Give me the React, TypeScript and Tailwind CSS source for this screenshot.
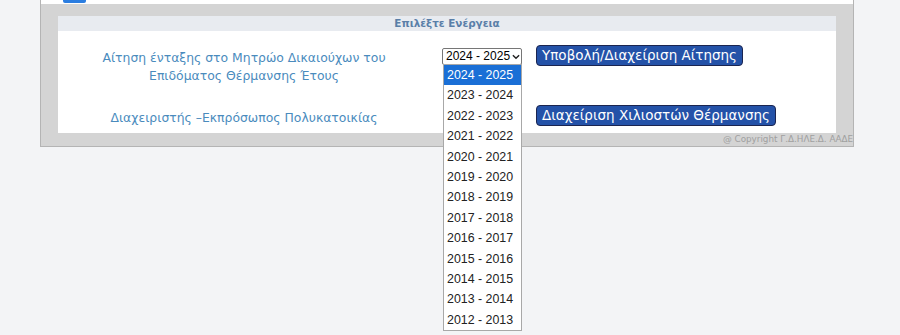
import React from "react";

const years = [
  "2024 - 2025","2023 - 2024","2022 - 2023","2021 - 2022","2020 - 2021","2019 - 2020","2018 - 2019",
  "2017 - 2018","2016 - 2017","2015 - 2016","2014 - 2015","2013 - 2014","2012 - 2013",
];

const verdana = { fontFamily: '"DejaVu Sans", Verdana, sans-serif' } as const;
const arial = { fontFamily: '"Liberation Sans", Arial, sans-serif' } as const;

export default function App() {
  return (
    <div className="w-[900px] h-[335px] bg-[#f3f4f6] overflow-hidden relative" style={verdana}>
      <div className="ml-[40px] w-[814px] border-l border-r border-b border-[#b4b4b4] bg-[#d4d4d4]">
        {/* top strip (cut off) */}
        <div className="h-[4px] bg-white relative flex">
          <div className="ml-[22px] w-[23px] h-[3px] bg-[#2b7de0] rounded-b-[2px]" />
        </div>
        <div className="px-[17px] pt-[12px] pb-[13px]">
          <div className="bg-white">
            <div className="h-[15px] bg-[#e8ebf0] text-center text-[10.4px] leading-[15px] font-bold text-[#5a7fa8]">
              Επιλέξτε Ενέργεια
            </div>
            {/* row 1 */}
            <div className="flex h-[64px]">
              <div className="w-[372px] text-center pt-[18px] text-[12.4px] leading-[18px] text-[#4a8bbd]">
                Αίτηση ένταξης στο Μητρώο Δικαιούχων του
                <br />
                Επιδόματος Θέρμανσης Έτους
              </div>
              <div className="w-[106px] pl-[12px] pt-[17px] relative">
                <div
                  className="w-[80px] h-[17px] border border-[#767676] rounded-[2px] flex items-center pl-[3px] text-[12px] text-black bg-white whitespace-nowrap"
                  style={arial}
                >
                  <span className="leading-[15px]">2024 - 2025</span>
                  <svg width="8" height="6" viewBox="0 0 9 6" className="ml-[2px] mt-[1px] shrink-0">
                    <path d="M1 1 L4.5 4.5 L8 1" fill="none" stroke="#222" strokeWidth="1.6" />
                  </svg>
                </div>
              </div>
              <div className="pt-[14px]">
                <div className="h-[21px] px-[5px] bg-[#2452a8] border border-[#1b2550] rounded-[4px] text-white text-[13.5px] leading-[19px] whitespace-nowrap">
                  Υποβολή/Διαχείριση Αίτησης
                </div>
              </div>
            </div>
            {/* row 2 */}
            <div className="flex h-[38px]">
              <div className="w-[372px] text-center pt-[14px] text-[12.4px] leading-[18px] text-[#4a8bbd]">
                Διαχειριστής –Εκπρόσωπος Πολυκατοικίας
              </div>
              <div className="w-[106px]" />
              <div className="pt-[10px]">
                <div className="h-[21px] px-[5px] bg-[#2452a8] border border-[#1b2550] rounded-[4px] text-white text-[13.5px] leading-[19px] whitespace-nowrap">
                  Διαχείριση Χιλιοστών Θέρμανσης
                </div>
              </div>
            </div>
          </div>
        </div>
        <div className="h-0 relative">
          <div className="absolute right-0 -top-[13px] text-[8.8px] leading-[12px] text-[#a0a0a0] whitespace-nowrap overflow-hidden">
            @ Copyright Γ.Δ.ΗΛΕ.Δ. ΑΑΔΕ
          </div>
        </div>
      </div>
      {/* open dropdown list */}
      <div
        className="absolute left-[443px] top-[64px] w-[79px] bg-white border border-[#a8a8a8] text-[12.4px] text-[#222]"
        style={arial}
      >
        {years.map((y, i) => (
          <div
            key={y}
            className={
              "h-[20.4px] leading-[20.4px] pl-[3px] whitespace-nowrap " + (i === 0 ? "bg-[#1a6fd6] text-white" : "")
            }
          >
            {y}
          </div>
        ))}
      </div>
    </div>
  );
}
